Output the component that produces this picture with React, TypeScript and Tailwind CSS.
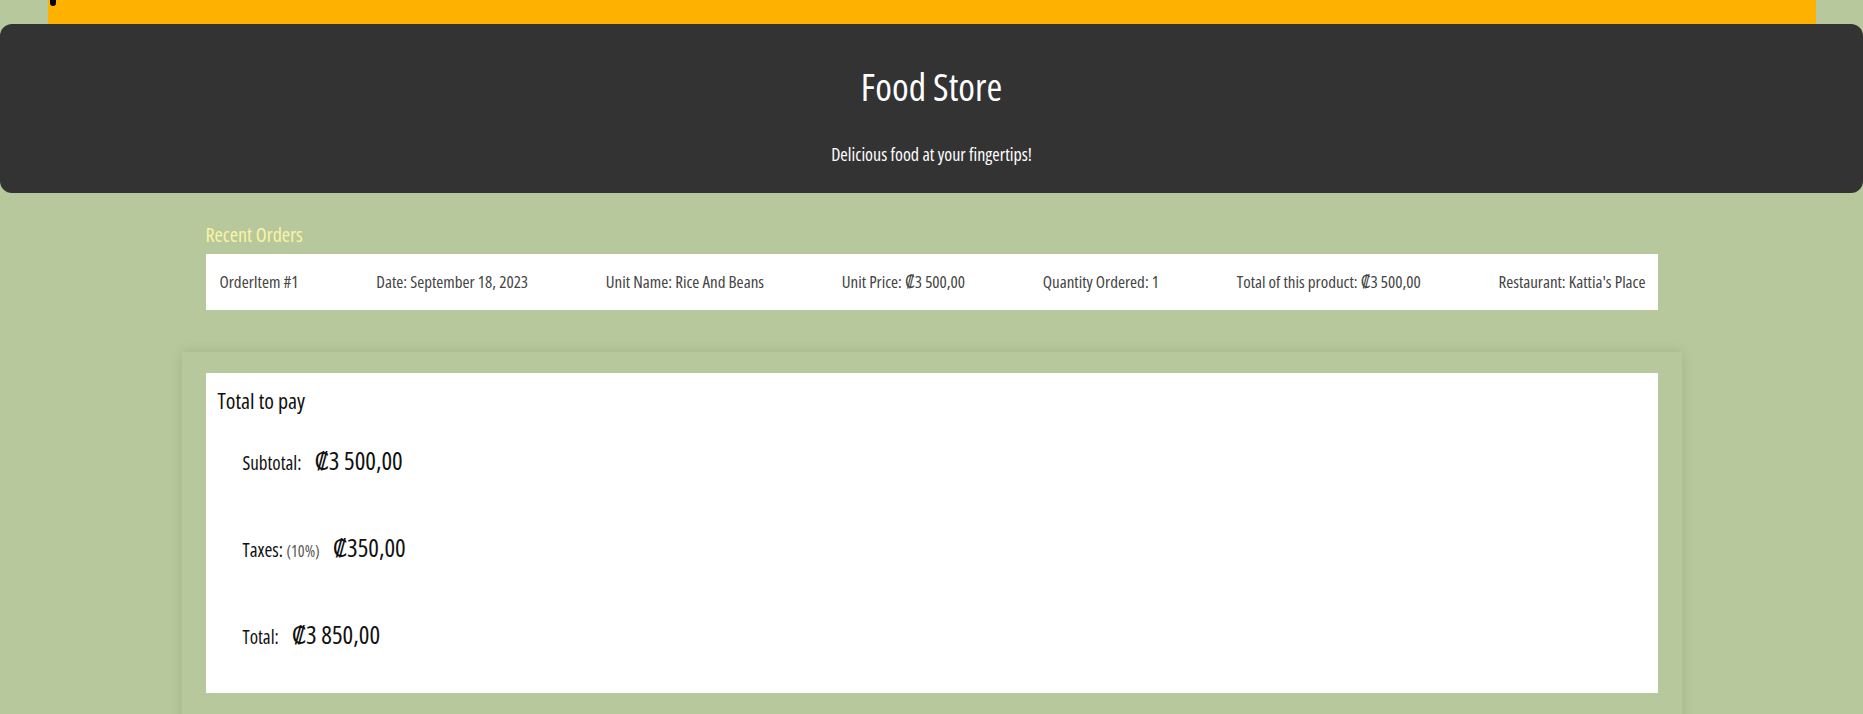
import React from 'react'

const order = [
  'OrderItem #1',
  'Date: September 18, 2023',
  'Unit Name: Rice And Beans',
  'Unit Price: ₡3 500,00',
  'Quantity Ordered: 1',
  'Total of this product: ₡3 500,00',
  "Restaurant: Kattia's Place",
]

export default function App() {
  return (
    <div className="h-[714px] overflow-hidden bg-[#b7c99c] font-['Open_Sans','DejaVu_Sans_Condensed',sans-serif] font-stretch-condensed">
      <div className="relative ml-[48px] mr-[47px] h-[24px] bg-[#ffb100]">
        <div className="absolute left-[2px] top-0 h-[6px] w-[6px] rounded-b-sm bg-black" />
      </div>
      <header className="flex h-[169px] flex-col items-center rounded-xl bg-[#333333] pt-[39px] text-white">
        <h1 className="text-[38px] leading-[46px]">Food Store</h1>
        <p className="mt-[33px] text-[18px] leading-[24px]">Delicious food at your fingertips!</p>
      </header>

      <main className="mx-auto w-[1452px] pt-[28px]">
        <h2 className="text-[20px] leading-[28px] text-[#fbf3a5]">Recent Orders</h2>
        <div className="mt-[5px] flex h-[56px] items-center justify-between bg-white pl-[14px] pr-[12px] text-[17px] text-[#444]">
          {order.map((t) => (
            <span key={t}>{t}</span>
          ))}
        </div>
      </main>

      <section className="mx-auto mt-[42px] w-[1500px] px-[24px] pt-[21px] pb-[40px] shadow-[0_0_12px_rgba(0,0,0,0.12)]">
        <div className="h-[320px] bg-white px-[12px] pt-[12px] text-[#111]">
          <h3 className="text-[22px] leading-[30px]">Total to pay</h3>
          <div className="mt-[27px] flex flex-col gap-[55px] pl-[25px]">
            <div className="flex h-[32px] items-baseline gap-[13px]">
              <span className="text-[19px]">Subtotal:</span>
              <span className="text-[25px]">₡3 500,00</span>
            </div>
            <div className="flex h-[32px] items-baseline gap-[13px]">
              <span className="text-[19px]">
                Taxes: <span className="text-[16px] text-[#555]">(10%)</span>
              </span>
              <span className="text-[25px]">₡350,00</span>
            </div>
            <div className="flex h-[32px] items-baseline gap-[13px]">
              <span className="text-[19px]">Total:</span>
              <span className="text-[25px]">₡3 850,00</span>
            </div>
          </div>
        </div>
      </section>
    </div>
  )
}
